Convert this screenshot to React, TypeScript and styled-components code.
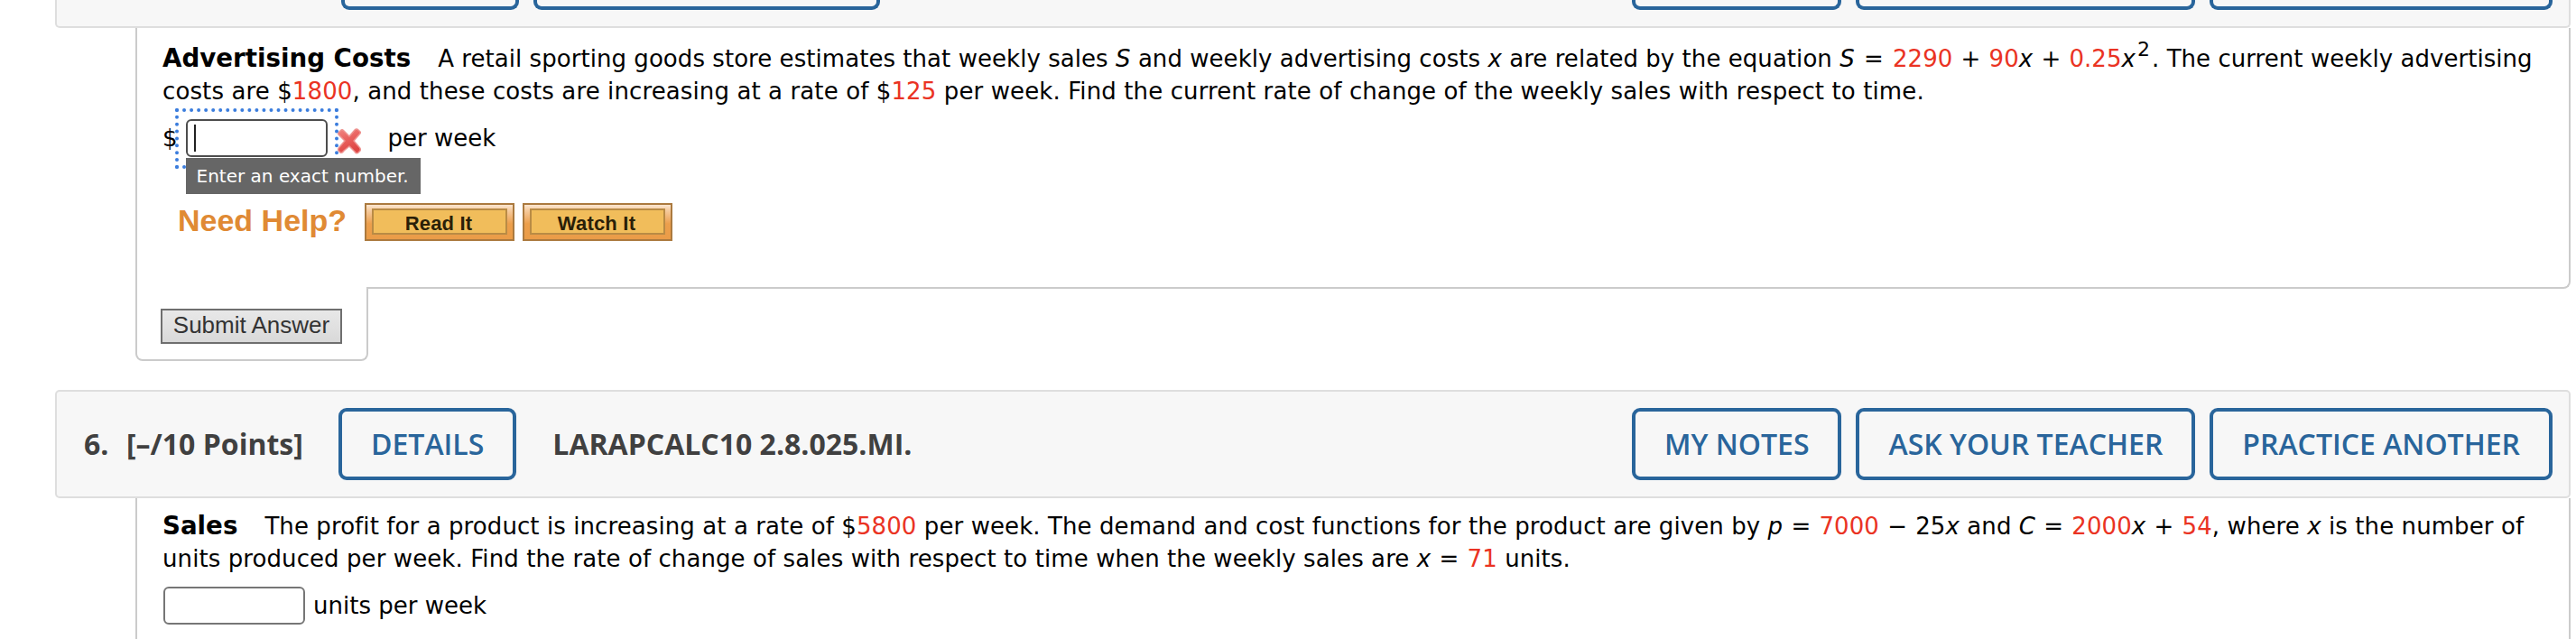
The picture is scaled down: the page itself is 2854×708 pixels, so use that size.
import React from "react";
import styled, { createGlobalStyle } from "styled-components";

const blue = "#29659b";
const lineColor = "#cbcbcb";

const GlobalStyle = createGlobalStyle`
  body {
    margin: 0;
    background: #fff;
    overflow: hidden;
  }
  * {
    box-sizing: border-box;
  }
`;

const Page = styled.main`
  width: 2787px;
  height: 708px;
  margin-left: 61px;
  overflow: hidden;
  font-family: Verdana, "DejaVu Sans", sans-serif;
  font-size: 26px;
  line-height: 36px;
  color: #000;
`;

const Header = styled.header`
  display: flex;
  align-items: center;
  height: 120px;
  padding: 0 18px 0 30px;
  border: 2px solid #dedede;
  border-radius: 5px;
  background: #f7f7f7;
  color: #404040;
  font: bold 32px/44px "Open Sans", sans-serif;
  white-space: pre;
`;

// previous question's header, scrolled almost out of view
const HeaderTail = styled(Header)`
  align-items: flex-start;
  height: 31px;
  padding-left: 315px;
  border-top: 0;
  border-radius: 0 0 5px 5px;
`;

const Actions = styled.div`
  display: flex;
  gap: 16px;
  margin-left: auto;
`;

const OutlineButton = styled.button`
  height: 80px;
  padding: 0 32px;
  border: 4px solid ${blue};
  border-radius: 9px;
  background: transparent;
  color: ${blue};
  font: 600 32px/44px "Open Sans", sans-serif;
  white-space: nowrap;
`;

const ButtonTail = styled.div<{ $width: number }>`
  width: ${(p) => p.$width}px;
  height: 11px;
  border: 4px solid ${blue};
  border-top: 0;
  border-radius: 0 0 9px 9px;
`;

const TailGroup = styled.div`
  display: flex;
  gap: 16px;
`;

const Index = styled.span`
  width: 47px;
`;

const Points = styled.span`
  width: 235px;
`;

const Code = styled.span`
  margin-left: 40px;
`;

const Question = styled.section<{ $top: number }>`
  height: 289px;
  margin-left: 89px;
  padding: ${(p) => p.$top}px 0 0 28px;
  border: 2px solid ${lineColor};
  border-top: 0;
  border-radius: 0 0 8px 0;
`;

const Line = styled.div<{ $track: number }>`
  letter-spacing: ${(p) => p.$track}px;
  white-space: pre;
`;

const Title = styled.b`
  margin-right: 30px;
  font-size: 27.7px;
  letter-spacing: 0;
`;

const Red = styled.span`
  color: #ea3323;
`;

const Op = styled.span<{ $gap?: number }>`
  margin: 0 ${(p) => p.$gap ?? 9.2}px;
`;

const Sup = styled.sup`
  position: relative;
  top: -12px;
  margin: 0 2px;
  font-size: 22px;
  line-height: 0;
  vertical-align: baseline;
`;

const AnswerRow = styled.div`
  display: flex;
  align-items: center;
  height: 42px;
  margin-top: 13px;
`;

const AnswerBox = styled.div`
  position: relative;
  width: 157px;
  height: 42px;
  margin-left: 1px;
  padding: 4px 7px;
  border: 2px solid #767676;
  border-radius: 6px;
`;

const FocusedBox = styled(AnswerBox)`
  margin-left: 9px;
  border-color: #4d4d4d;

  &::before {
    content: "";
    position: absolute;
    inset: -14px -14px -15px;
    border: 4px dotted #3b7ddd;
  }
`;

const Caret = styled.div`
  width: 2px;
  height: 30px;
  background: #222;
`;

const Tooltip = styled.div`
  position: absolute;
  z-index: 1;
  top: 41px;
  left: -2px;
  width: 260px;
  height: 40px;
  padding-left: 12px;
  background: #666;
  color: #fff;
  font-size: 20px;
  line-height: 41px;
  white-space: nowrap;
`;

const WrongMark = styled.svg`
  width: 28px;
  height: 32px;
  margin: 8px 29px 0 10px;
`;

const Unit = styled.span<{ $gap?: number }>`
  margin-left: ${(p) => p.$gap ?? 0}px;
`;

const Help = styled.div`
  display: flex;
  gap: 9px;
  height: 42px;
  margin-top: 51px;
  padding-left: 17px;
  font-family: Arial, "Liberation Sans", sans-serif;
`;

const HelpLabel = styled.span`
  width: 198px;
  color: #e08a34;
  font-size: 34px;
  font-weight: bold;
  line-height: 39px;
`;

const HelpButton = styled.div`
  display: flex;
  width: 166px;
  height: 42px;
  padding: 4px 6px 5px;
  border: 2px solid #ab7a3f;
  background: linear-gradient(#fbe6d0 0, #f6cda2 15%, #ec9f4c 55%, #ea9c48);
`;

const HelpButtonFace = styled.div`
  flex: 1;
  padding-right: 2px;
  border: 2px solid #b98b45;
  background: #f1bd5b;
  color: #2a1f08;
  font-size: 22px;
  font-weight: bold;
  line-height: 29px;
  letter-spacing: 0.2px;
  text-align: center;
`;

const SubmitTab = styled.div`
  width: 258px;
  height: 82px;
  margin: -2px 0 32px 89px;
  padding: 24px 0 0 26px;
  border: 2px solid ${lineColor};
  border-top: 0;
  border-radius: 0 0 8px 8px;
  background: #fff;
`;

const SubmitButton = styled.button`
  display: block;
  width: 201px;
  height: 39px;
  padding: 0 0 2px;
  border: 2px solid #6f6f6f;
  background: linear-gradient(#e8e8e8, #d9d9d9);
  color: #333;
  font: 26px/33px Arial, "Liberation Sans", sans-serif;
  white-space: nowrap;
`;

const actions = ["MY NOTES", "ASK YOUR TEACHER", "PRACTICE ANOTHER"];

function Cross() {
  return (
    <WrongMark viewBox="0 0 28 32">
      <defs>
        <linearGradient id="cross" x1="0" y1="0" x2="0.4" y2="1">
          <stop offset="0" stopColor="#f08783" />
          <stop offset="0.5" stopColor="#e9615e" />
          <stop offset="1" stopColor="#dd4543" />
        </linearGradient>
      </defs>
      <path
        d="M2 6 L5 3 Q6 2 8 4 L14 10 L20 3 Q22 1 24 3 L26 5 Q27 6 25 8 L19 15 L25 22 Q27 24 26 26 L24 28 Q22 30 20 27 L14 21 L8 26 Q6 29 4 28 L2 26 Q1 24 3 22 L9 15 L3 9 Q1 7 2 6 Z"
        fill="url(#cross)"
        stroke="#ee928f"
        strokeWidth="1.5"
        strokeLinejoin="round"
      />
    </WrongMark>
  );
}

export default function App() {
  return (
    <>
      <GlobalStyle />
      <Page>
        <HeaderTail>
          <TailGroup>
            <ButtonTail $width={197} />
            <ButtonTail $width={384} />
          </TailGroup>
          <Actions>
            <ButtonTail $width={232} />
            <ButtonTail $width={376} />
            <ButtonTail $width={380} />
          </Actions>
        </HeaderTail>
        <Question $top={16}>
          <Line $track={0.05}>
            <Title>Advertising Costs</Title>A retail sporting goods store estimates that weekly sales <i>S</i> and weekly
            {" "}advertising costs <i>x</i> are related by the equation <i>S</i>
            <Op $gap={10.2}>=</Op>
            <Red>2290</Red>
            <Op>+</Op>
            <Red>90</Red>
            <i>x</i>
            <Op>+</Op>
            <Red>0.25</Red>
            <i>x</i>
            <Sup>2</Sup>. The current weekly advertising
          </Line>
          <Line $track={0.11}>
            costs are $<Red>1800</Red>, and these costs are increasing at a rate of $<Red>125</Red> per week. Find the
            {" "}current rate of change of the weekly sales with respect to time.
          </Line>
          <AnswerRow>
            $
            <FocusedBox>
              <Caret />
              <Tooltip>Enter an exact number.</Tooltip>
            </FocusedBox>
            <Cross />
            <Unit>per week</Unit>
          </AnswerRow>
          <Help>
            <HelpLabel>Need Help?</HelpLabel>
            <HelpButton>
              <HelpButtonFace>Read It</HelpButtonFace>
            </HelpButton>
            <HelpButton>
              <HelpButtonFace>Watch It</HelpButtonFace>
            </HelpButton>
          </Help>
        </Question>
        <SubmitTab>
          <SubmitButton>Submit Answer</SubmitButton>
        </SubmitTab>
        <Header>
          <Index>6.</Index>
          <Points>[–/10 Points]</Points>
          <OutlineButton>DETAILS</OutlineButton>
          <Code>LARAPCALC10 2.8.025.MI.</Code>
          <Actions>
            {actions.map((label) => (
              <OutlineButton key={label}>{label}</OutlineButton>
            ))}
          </Actions>
        </Header>
        <Question $top={13}>
          <Line $track={0.085}>
            <Title>Sales</Title>The profit for a product is increasing at a rate of $<Red>5800</Red> per week. The demand
            {" "}and cost functions for the product are given by <i>p</i>
            <Op>=</Op>
            <Red>7000</Red>
            <Op>−</Op>25<i>x</i> and <i>C</i>
            <Op>=</Op>
            <Red>2000</Red>
            <i>x</i>
            <Op>+</Op>
            <Red>54</Red>, where <i>x</i> is the number of
          </Line>
          <Line $track={0.085}>
            units produced per week. Find the rate of change of sales with respect to time when the weekly sales are <i>x</i>
            <Op>=</Op>
            <Red>71</Red> units.
          </Line>
          <AnswerRow>
            <AnswerBox />
            <Unit $gap={9}>units per week</Unit>
          </AnswerRow>
        </Question>
      </Page>
    </>
  );
}
